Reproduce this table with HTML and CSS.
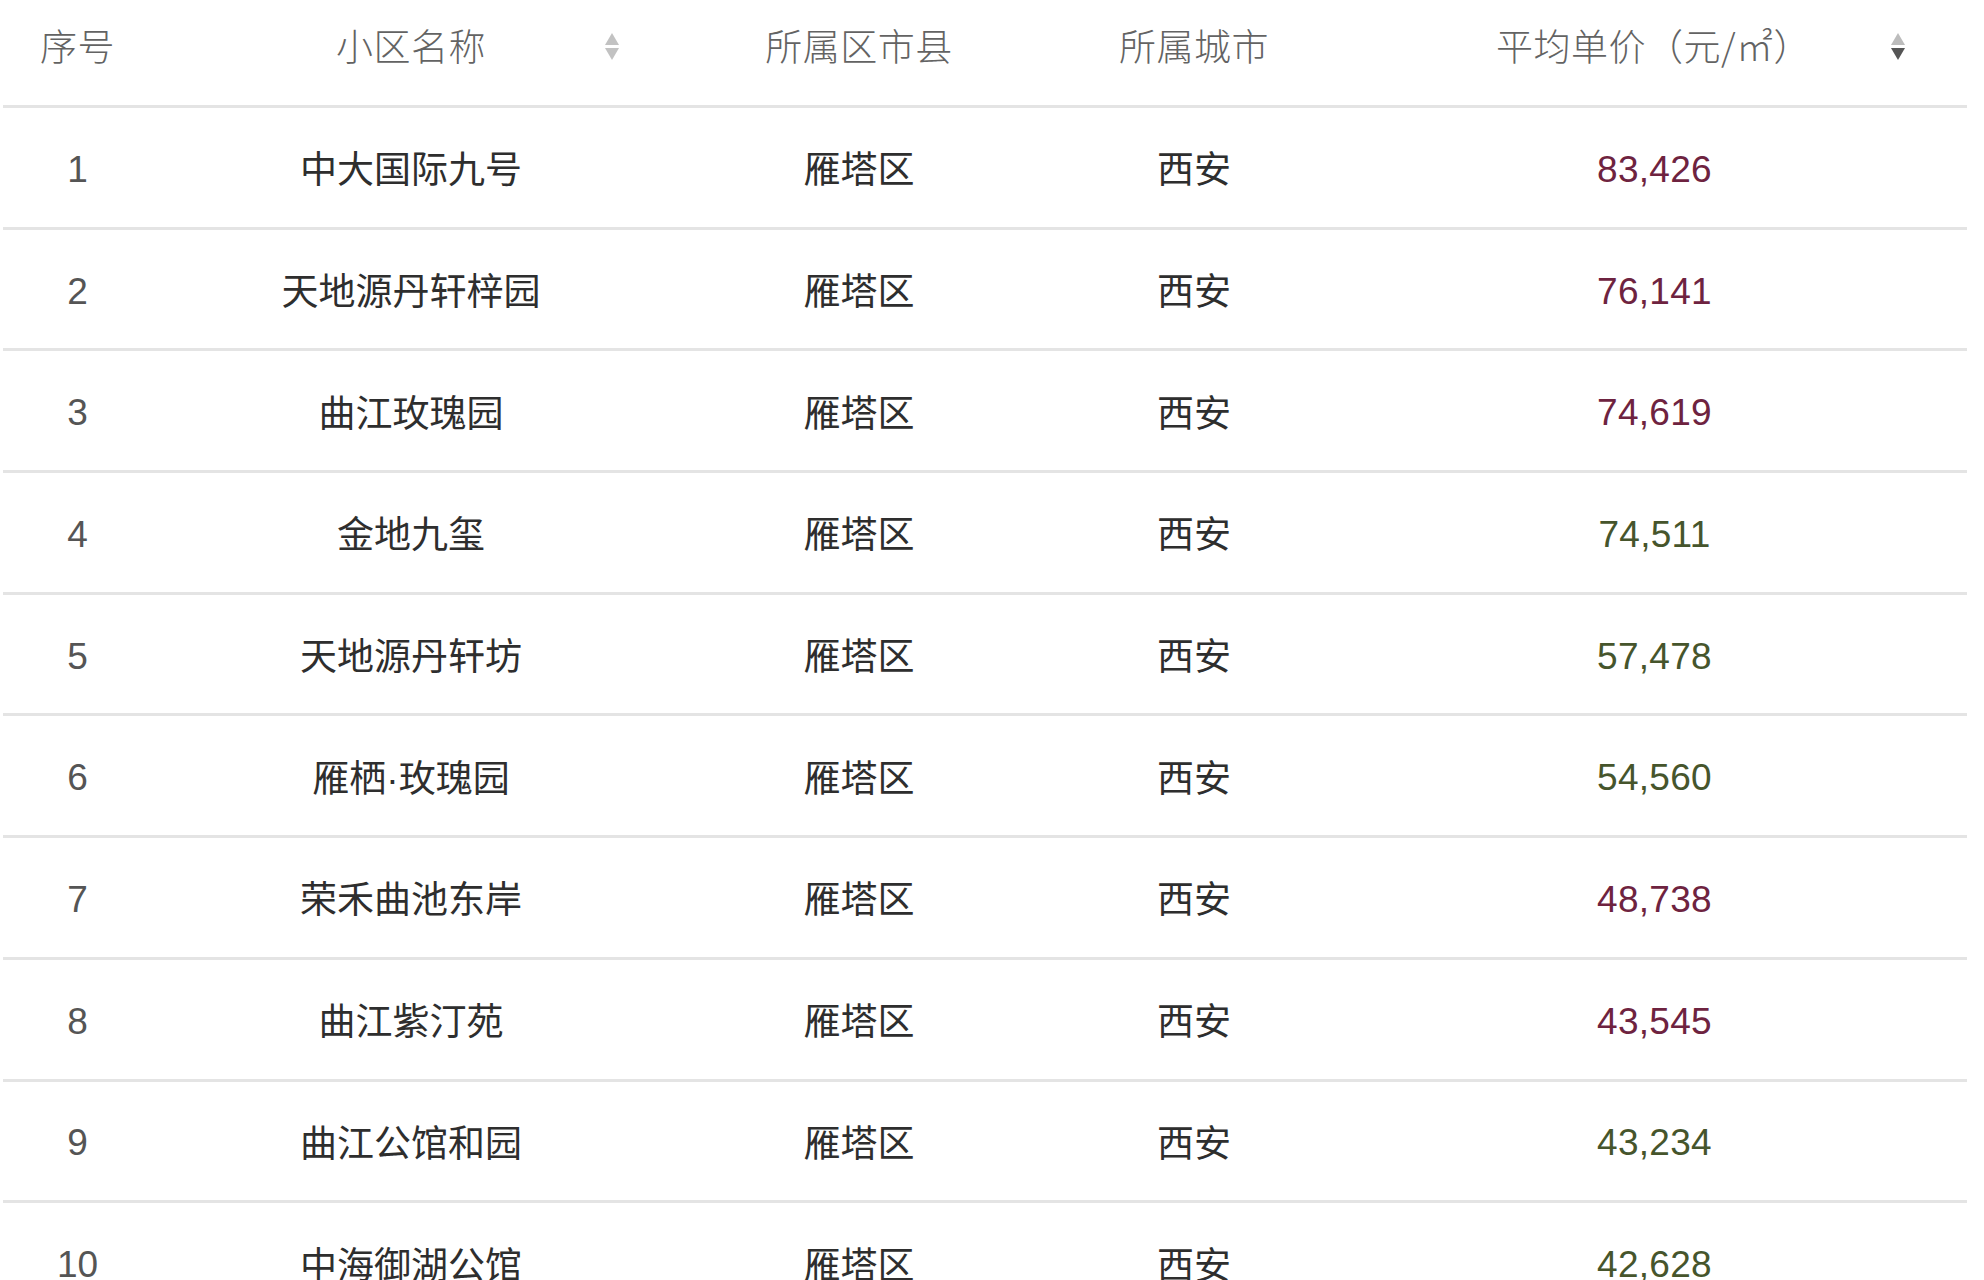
FILE: index.html
```html
<!DOCTYPE html>
<html lang="zh-CN">
<head>
<meta charset="utf-8">
<title>小区均价排行</title>
<link rel="stylesheet" href="styles.css">
</head>
<body>
<table class="rank">
  <colgroup>
    <col class="c-idx"><col class="c-name"><col class="c-dist"><col class="c-city"><col class="c-price">
  </colgroup>
  <thead>
    <tr>
      <th><div class="hd"><span></span><span class="lbl">序号</span><span></span></div></th>
      <th><div class="hd sortable pad-name"><span></span><span class="lbl">小区名称</span>
        <svg class="sort" viewBox="0 0 14 28" width="14" height="28"><polygon class="up" points="7,0 14,12 0,12"/><polygon class="down" points="0,15 14,15 7,27"/></svg></div></th>
      <th><div class="hd"><span></span><span class="lbl">所属区市县</span><span></span></div></th>
      <th><div class="hd"><span></span><span class="lbl">所属城市</span><span></span></div></th>
      <th><div class="hd sortable pad-price"><span></span><span class="lbl">平均单价（元/㎡）</span>
        <svg class="sort active" viewBox="0 0 14 28" width="14" height="28"><polygon class="up" points="7,0 14,12 0,12"/><polygon class="down" points="0,15 14,15 7,27"/></svg></div></th>
    </tr>
  </thead>
  <tbody>
    <tr><td class="idx"><span class="num">1</span></td><td>中大国际九号</td><td>雁塔区</td><td>西安</td><td class="price red"><span class="num">83,426</span></td></tr>
    <tr><td class="idx"><span class="num">2</span></td><td>天地源丹轩梓园</td><td>雁塔区</td><td>西安</td><td class="price red"><span class="num">76,141</span></td></tr>
    <tr><td class="idx"><span class="num">3</span></td><td>曲江玫瑰园</td><td>雁塔区</td><td>西安</td><td class="price red"><span class="num">74,619</span></td></tr>
    <tr><td class="idx"><span class="num">4</span></td><td>金地九玺</td><td>雁塔区</td><td>西安</td><td class="price green"><span class="num">74,511</span></td></tr>
    <tr><td class="idx"><span class="num">5</span></td><td>天地源丹轩坊</td><td>雁塔区</td><td>西安</td><td class="price green"><span class="num">57,478</span></td></tr>
    <tr><td class="idx"><span class="num">6</span></td><td>雁栖·玫瑰园</td><td>雁塔区</td><td>西安</td><td class="price green"><span class="num">54,560</span></td></tr>
    <tr><td class="idx"><span class="num">7</span></td><td>荣禾曲池东岸</td><td>雁塔区</td><td>西安</td><td class="price red"><span class="num">48,738</span></td></tr>
    <tr><td class="idx"><span class="num">8</span></td><td>曲江紫汀苑</td><td>雁塔区</td><td>西安</td><td class="price red"><span class="num">43,545</span></td></tr>
    <tr><td class="idx"><span class="num">9</span></td><td>曲江公馆和园</td><td>雁塔区</td><td>西安</td><td class="price green"><span class="num">43,234</span></td></tr>
    <tr><td class="idx"><span class="num">10</span></td><td>中海御湖公馆</td><td>雁塔区</td><td>西安</td><td class="price green"><span class="num">42,628</span></td></tr>
  </tbody>
</table>
</body>
</html>
```
FILE: styles.css
```css
html, body {
  margin: 0;
  padding: 0;
  background: #ffffff;
  overflow: hidden;
}
body {
  padding-left: 3px;
  font-family: "Liberation Sans", "Noto Sans CJK SC", sans-serif;
}
.rank {
  width: 1964px;
  border-collapse: collapse;
  table-layout: fixed;
  font-size: 37px;
}
.c-idx { width: 149px; }
.c-name { width: 518px; }
.c-dist { width: 378px; }
.c-city { width: 292px; }
.c-price { width: 627px; }

.rank th {
  height: 105px;
  padding: 0;
  font-weight: normal;
  color: #636363;
  border-bottom: 3px solid #e4e4e4;
  vertical-align: middle;
}
.hd {
  display: grid;
  grid-template-columns: 1fr auto 1fr;
  align-items: center;
  margin-top: -15px;
}
.hd .lbl {
  white-space: nowrap;
  font-family: "Noto Sans CJK SC", sans-serif;
  font-weight: 300;
  letter-spacing: 0.5px;
}
.sort {
  justify-self: end;
  display: block;
  margin-top: 4px;
}
.pad-name .sort { margin-right: 51px; }
.pad-price .sort { margin-right: 62px; }
.sort .up, .sort .down { fill: #c2c2c2; }
.sort.active .up { fill: #bcbcbc; }
.sort.active .down { fill: #555555; }

.rank td {
  height: 118.7px;
  padding: 0;
  text-align: center;
  vertical-align: middle;
  color: #2e2e2e;
  border-bottom: 3px solid #e4e4e4;
  white-space: nowrap;
}
.num {
  display: inline-block;
  padding-top: 5px;
}
.rank td.idx { color: #555555; }
.rank td.price { padding-left: 2px; letter-spacing: 0.3px; }
.rank td.red { color: #6e2340; }
.rank td.green { color: #46552c; }
```
